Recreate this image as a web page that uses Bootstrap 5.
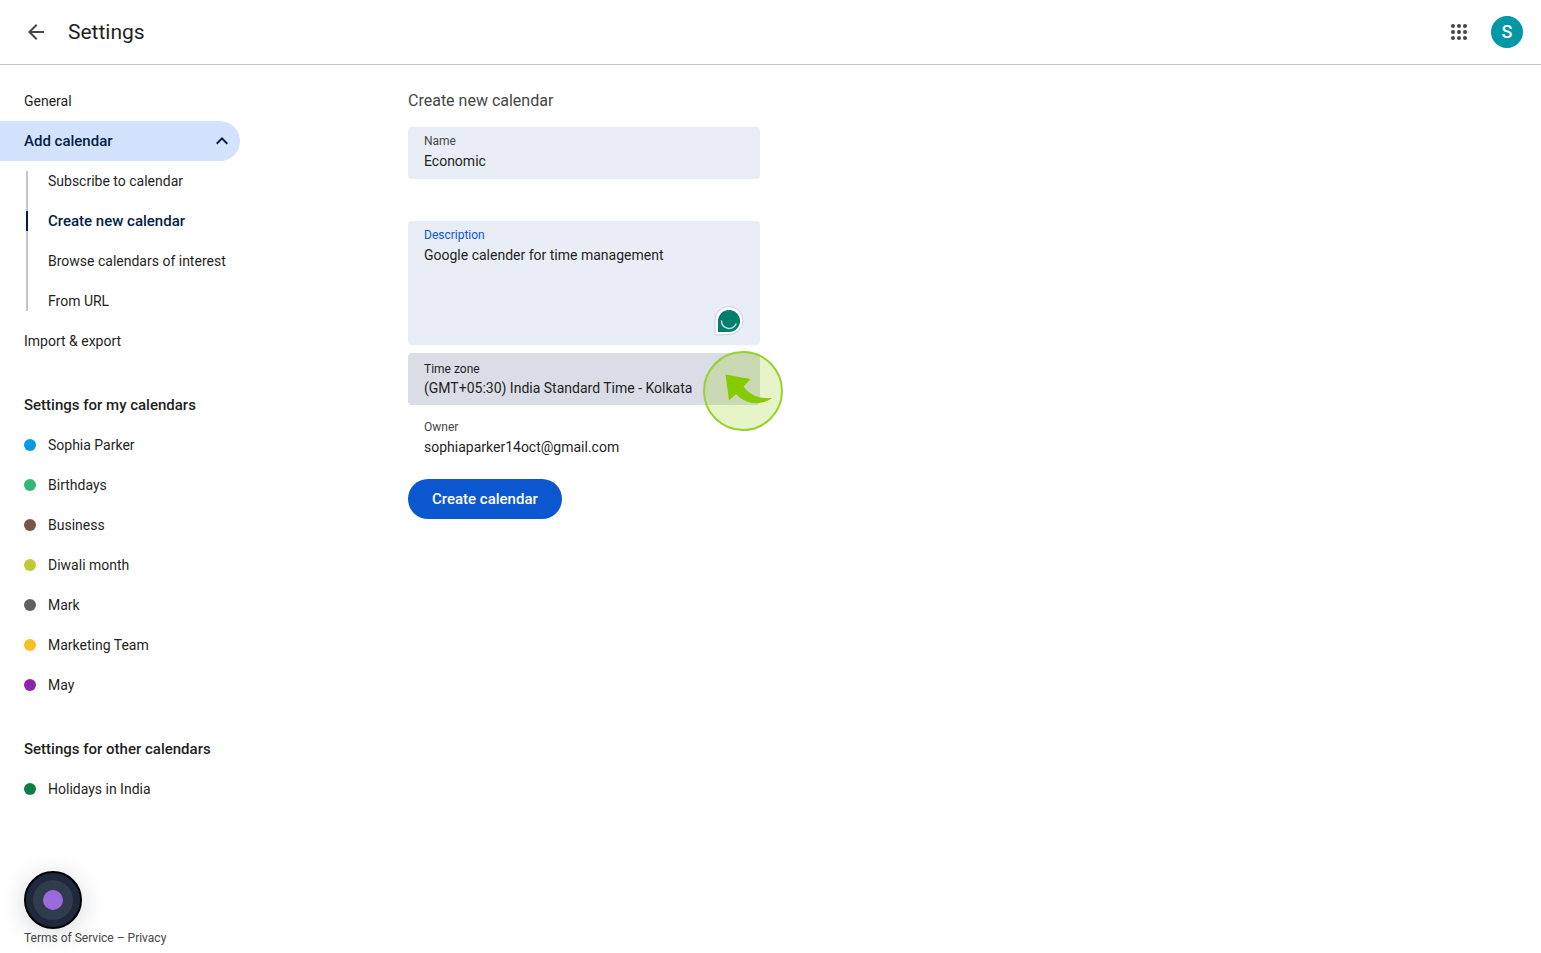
<!DOCTYPE html>
<html lang="en">
<head>
<meta charset="utf-8">
<meta name="viewport" content="width=device-width, initial-scale=1">
<title>Settings</title>
<link href="https://cdn.jsdelivr.net/npm/bootstrap@5.3.0/dist/css/bootstrap.min.css" rel="stylesheet">
<style>
  body { font-family: Roboto, "Liberation Sans", sans-serif; font-size: 14px; line-height: 20px; color: #1f1f1f; background: #fff; }
  a { color: inherit; text-decoration: none; }
  .topbar { height: 65px; border-bottom: 1px solid #c4c7c5; padding: 0 18px 0 24px; }
  .topbar h1 { font-size: 21px; line-height: 28px; font-weight: 400; }
  .icon-btn { border: 0; background: none; padding: 0; width: 24px; height: 24px; display: block; color: #444746; }
  .icon-btn svg { display: block; }
  .avatar { width: 32px; height: 32px; background: #0097a7; color: #fff; font-size: 18px; font-weight: 500; }
  .side { width: 240px; }
  .side-row { display: flex; align-items: center; height: 40px; padding: 0 12px 0 24px; white-space: nowrap; }
  .side-head { font-size: 15px; font-weight: 500; margin: 24px 0 0; }
  .side-open { background: #d3e3fd; color: #041e49; border: 0; border-radius: 0 20px 20px 0; font-size: 15px; font-weight: 500; width: 100%; }
  .sub-list { margin-left: 26px; }
  .sub-list a { display: flex; align-items: center; height: 40px; position: relative; padding-left: 22px; white-space: nowrap; }
  .sub-list a::before { content: ""; position: absolute; left: 0; top: 0; bottom: 0; width: 2px; background: #c4c7c5; }
  .sub-list li:first-child a::before { top: 10px; }
  .sub-list li:last-child a::before { bottom: 10px; }
  .sub-list a.current { color: #041e49; font-size: 15px; font-weight: 500; }
  .sub-list a.current::after { content: ""; position: absolute; left: 0; top: 10px; bottom: 10px; width: 2px; background: #041e49; }
  .dot { width: 12px; height: 12px; border-radius: 50%; margin-right: 12px; }
  .legal { font-size: 12px; line-height: 16px; color: #444746; padding: 0 0 7px 24px; }
  .pane { padding: 24px 16px 24px 168px; }
  .form-col { max-width: 352px; }
  .pane h2 { font-size: 16px; line-height: 24px; font-weight: 400; color: #444746; margin-bottom: 14px; }
  .field { position: relative; border-radius: 4px; background: #e9eef6; padding: 6px 16px 8px; }
  .field label, .owner-label { display: block; font-size: 12px; line-height: 16px; color: #444746; }
  .field input, .field textarea, .field select { display: block; width: 100%; border: 0; padding: 0; margin: 2px 0 0; background: none; color: #1f1f1f; font-size: 14px; line-height: 20px; height: 20px; outline: 0; resize: none; appearance: none; }
  .field textarea { height: 92px; }
  .field.desc { margin-top: 42px; }
  .field.desc label { color: #0b57d0; }
  .field.zone { background: #dadde6; padding-top: 8px; padding-bottom: 7px; }
  .field.zone label { color: #1f1f1f; }
  .field.zone select { margin-top: 1px; }
  .helper { position: absolute; right: 16px; bottom: 9px; width: 30px; height: 30px; }
  .pointer-mark { position: absolute; right: -23px; top: -2px; pointer-events: none; }
  .owner { margin: 14px 0 22px; }
  .owner-label { margin-bottom: 2px; }
  .create { background: #0b57d0; color: #fff; border: 0; border-radius: 20px; height: 40px; padding: 0 24px; font-size: 15px; line-height: 20px; font-weight: 500; }
  .create:hover { background: #0b57d0; color: #fff; }
  .rec { width: 58px; height: 58px; left: 24px; bottom: 24px; border: 0; padding: 0; background: none; border-radius: 50%; box-shadow: 0 4px 24px rgba(30, 41, 59, .18); }
  .rec svg { display: block; }
</style>
</head>
<body>
<div class="min-vh-100 d-flex flex-column">
  <header class="topbar d-flex align-items-center">
    <button class="icon-btn" type="button" aria-label="Go back">
      <svg width="24" height="24" viewBox="0 0 24 24" fill="currentColor"><path d="M20 11H7.83l5.59-5.59L12 4l-8 8 8 8 1.41-1.41L7.83 13H20v-2z"/></svg>
    </button>
    <h1 class="mb-0 ms-3 ps-1">Settings</h1>
    <div class="ms-auto d-flex align-items-center gap-3">
      <button class="icon-btn me-1" type="button" aria-label="Apps">
        <svg width="24" height="24" viewBox="0 0 24 24" fill="currentColor"><circle cx="6" cy="6" r="2"/><circle cx="12" cy="6" r="2"/><circle cx="18" cy="6" r="2"/><circle cx="6" cy="12" r="2"/><circle cx="12" cy="12" r="2"/><circle cx="18" cy="12" r="2"/><circle cx="6" cy="18" r="2"/><circle cx="12" cy="18" r="2"/><circle cx="18" cy="18" r="2"/></svg>
      </button>
      <button class="avatar rounded-circle border-0 p-0" type="button">S</button>
    </div>
  </header>

  <div class="d-flex flex-grow-1">
    <nav class="side flex-shrink-0 d-flex flex-column pt-3" aria-label="Settings">
      <a class="side-row" href="#">General</a>
      <button class="side-row side-open justify-content-between" type="button" aria-expanded="true">Add calendar
        <svg width="12" height="12" viewBox="0 0 12 12" fill="none" stroke="currentColor" stroke-width="2"><path d="M.7 8.7 6 3.4l5.300 5.300"/></svg>
      </button>
      <ul class="sub-list list-unstyled mb-0">
        <li><a href="#">Subscribe to calendar</a></li>
        <li><a href="#" class="current" aria-current="page">Create new calendar</a></li>
        <li><a href="#">Browse calendars of interest</a></li>
        <li><a href="#">From URL</a></li>
      </ul>
      <a class="side-row" href="#">Import &amp; export</a>

      <h2 class="side-row side-head">Settings for my calendars</h2>
      <a class="side-row" href="#"><span class="dot" style="background:#039be5"></span>Sophia Parker</a>
      <a class="side-row" href="#"><span class="dot" style="background:#33b679"></span>Birthdays</a>
      <a class="side-row" href="#"><span class="dot" style="background:#795548"></span>Business</a>
      <a class="side-row" href="#"><span class="dot" style="background:#c0ca33"></span>Diwali month</a>
      <a class="side-row" href="#"><span class="dot" style="background:#616161"></span>Mark</a>
      <a class="side-row" href="#"><span class="dot" style="background:#f6bf26"></span>Marketing Team</a>
      <a class="side-row" href="#"><span class="dot" style="background:#8e24aa"></span>May</a>

      <h2 class="side-row side-head">Settings for other calendars</h2>
      <a class="side-row" href="#"><span class="dot" style="background:#0b8043"></span>Holidays in India</a>

      <div class="legal mt-auto"><a href="#">Terms of Service</a> – <a href="#">Privacy</a></div>
    </nav>

    <main class="pane flex-grow-1">
      <form class="form-col">
        <h2>Create new calendar</h2>
        <div class="field">
          <label for="name">Name</label>
          <input id="name" type="text" value="Economic">
        </div>
        <div class="field desc mb-2">
          <label for="desc">Description</label>
          <textarea id="desc" spellcheck="false">Google calender for time management</textarea>
          <svg class="helper" viewBox="0 0 30 30"><path d="M1 29V15A14 14 0 1 1 15 28.500Z" fill="#fff" stroke="#c9ced8"/><path d="M4 26V15A11 11 0 1 1 15 26Z" fill="#027e6f"/><path d="M7.500 14.500c0 8.500 11 11 14.800 3" fill="none" stroke="#b9e0da" stroke-width="1.500"/></svg>
        </div>
        <div class="field zone">
          <label for="zone">Time zone</label>
          <select id="zone"><option>(GMT+05:30) India Standard Time - Kolkata</option></select>
          <svg class="pointer-mark" width="80" height="80" viewBox="0 0 80 80"><circle cx="40" cy="40" r="39" fill="#8fce00" fill-opacity=".22" stroke="#98d02c" stroke-width="2"/><path d="M22.500 23.500 47.500 28l-7 7.500C46 43 54 48 69 47c-9 7-25 8-36-4l-7 6.500Z" fill="#86cb00"/></svg>
        </div>
        <div class="owner px-3">
          <div class="owner-label">Owner</div>
          <div>sophiaparker14oct@gmail.com</div>
        </div>
        <button class="btn create" type="button">Create calendar</button>
      </form>
    </main>
  </div>
</div>

<button class="rec position-fixed" type="button" aria-label="Recorder">
  <svg width="58" height="58" viewBox="0 0 58 58"><circle cx="29" cy="29" r="28" fill="#1e293b" stroke="#000" stroke-width="2"/><circle cx="29" cy="29" r="20" fill="#303b4b"/><circle cx="29" cy="29" r="10" fill="#9b6bdb"/></svg>
</button>
<script src="https://cdn.jsdelivr.net/npm/bootstrap@5.3.0/dist/js/bootstrap.bundle.min.js"></script>
</body>
</html>
